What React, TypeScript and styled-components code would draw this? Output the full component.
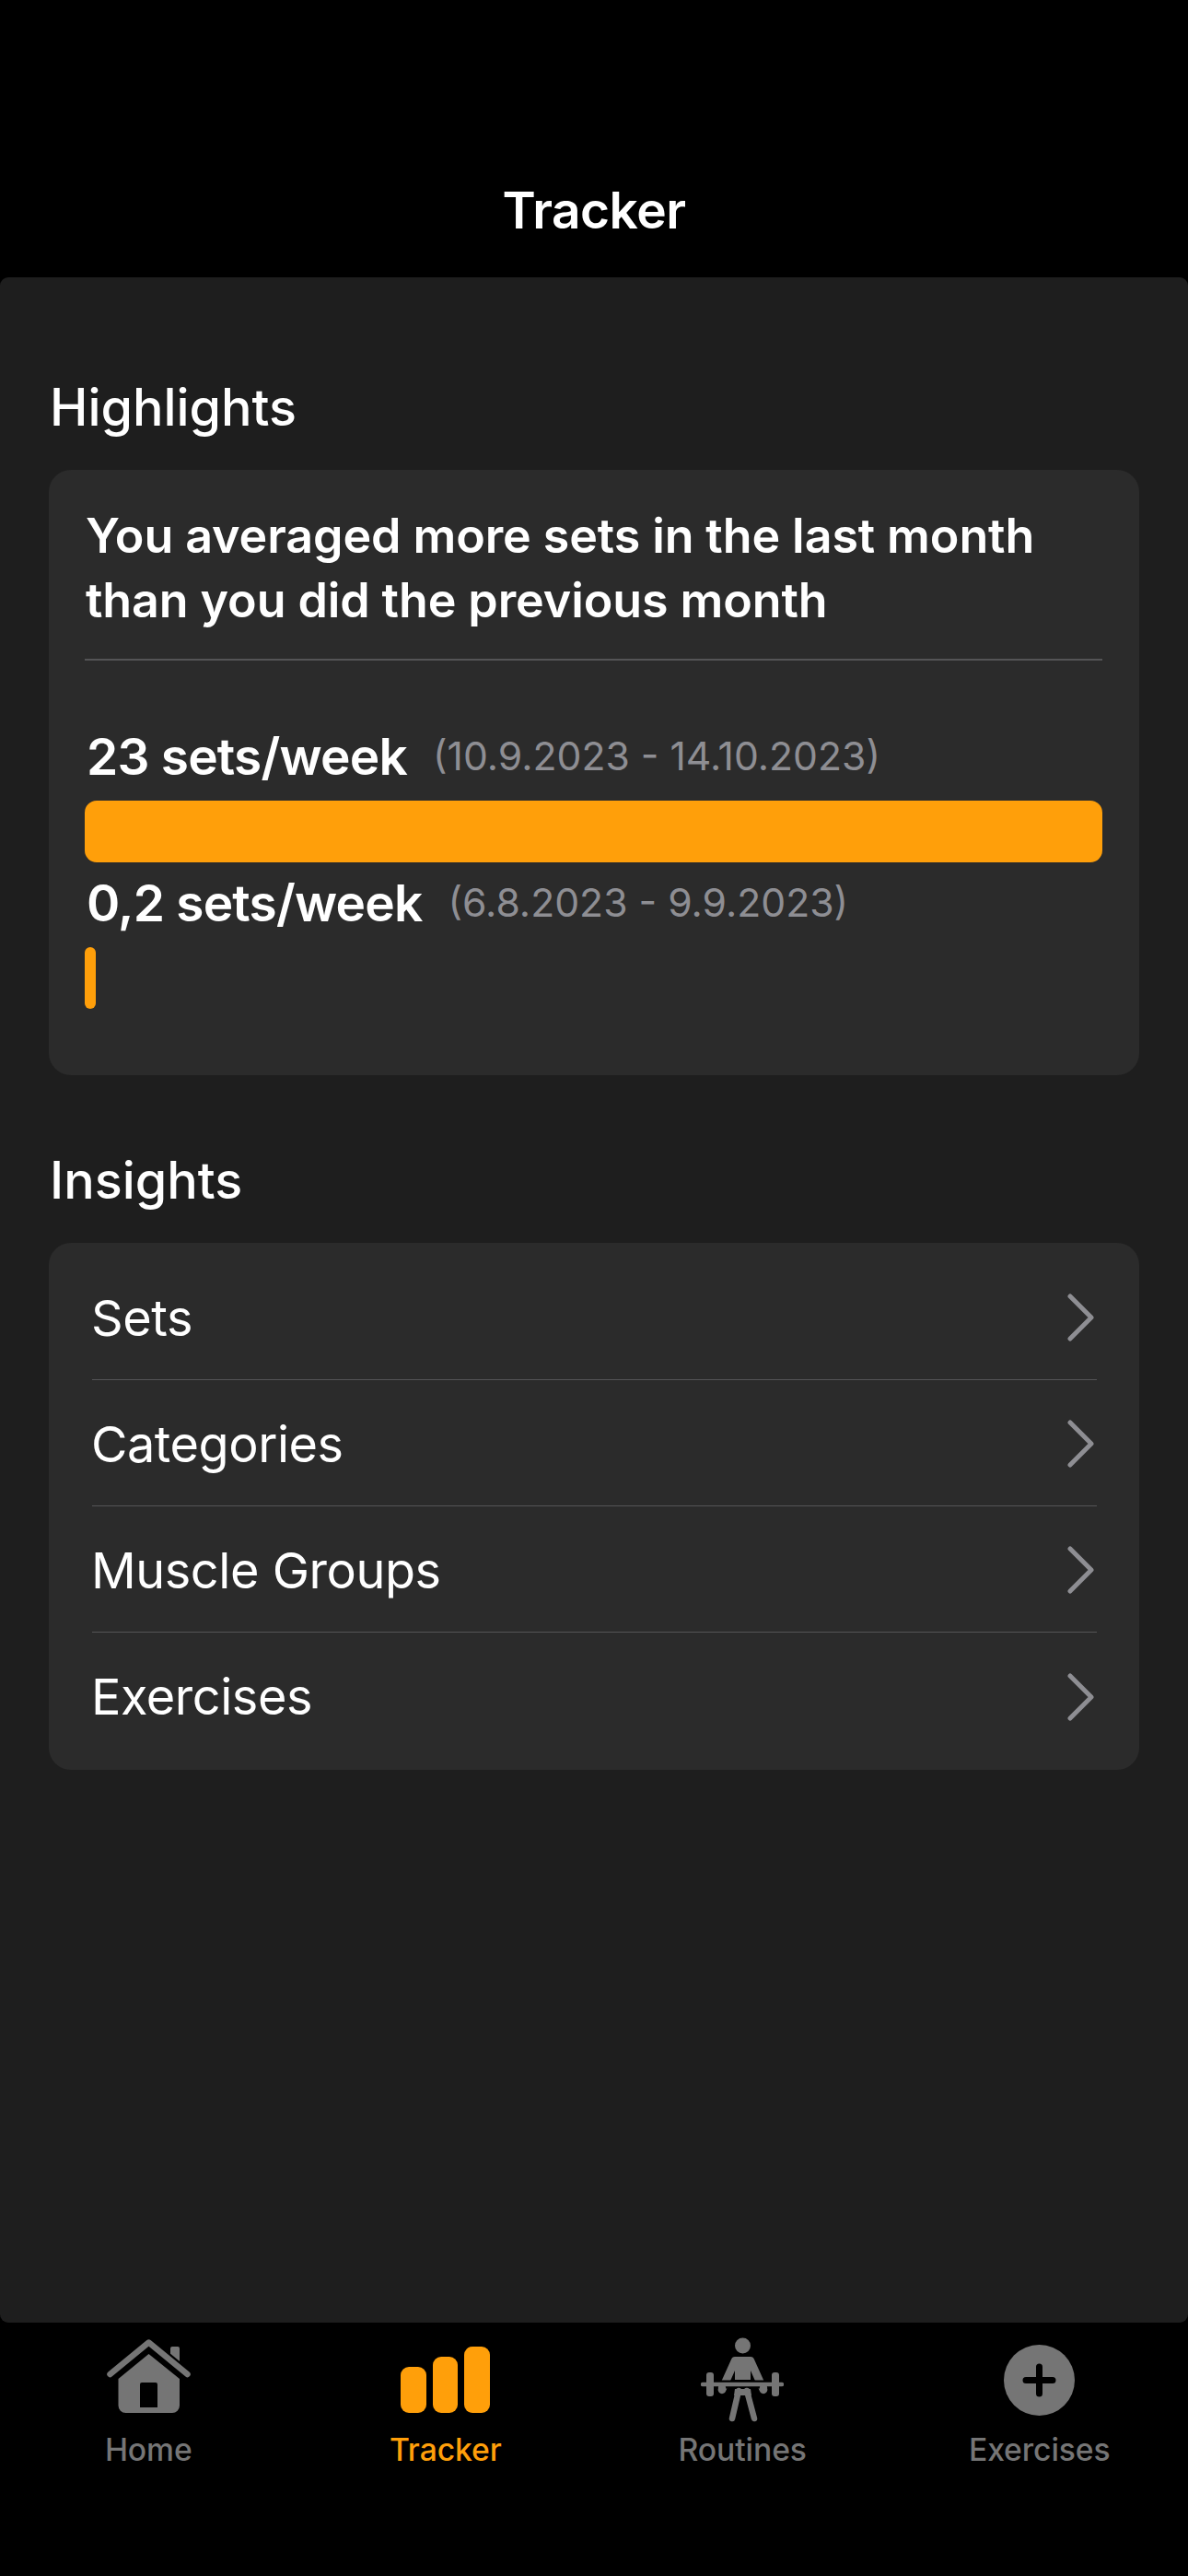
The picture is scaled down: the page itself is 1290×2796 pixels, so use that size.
import React from "react";
import styled, { createGlobalStyle } from "styled-components";

const GlobalStyle = createGlobalStyle`
  html, body {
    margin: 0;
    padding: 0;
    background: #000;
  }
  * {
    box-sizing: border-box;
  }
`;

const ORANGE = "#ff9f0a";
const GRAY = "#757575";

const Screen = styled.div`
  width: 1290px;
  height: 2796px;
  display: flex;
  flex-direction: column;
  background: #000;
  color: #fff;
  font-family: Inter, "Liberation Sans", sans-serif;
`;

const Header = styled.header`
  height: 301px;
  padding-top: 193px;
  text-align: center;
`;

const Title = styled.h1`
  margin: 0;
  font-size: 55px;
  line-height: 70px;
  font-weight: 600;
  letter-spacing: -0.5px;
`;

const Panel = styled.main`
  height: 2220px;
  padding: 107px 53px 0;
  background: #1e1e1e;
  border-radius: 9px;
`;

const Section = styled.section`
  margin-bottom: 80px;
`;

const SectionTitle = styled.h2`
  margin: 0 0 34px;
  padding-left: 1px;
  font-size: 55.7px;
  line-height: 68px;
  font-weight: 500;
`;

const Card = styled.div`
  background: #2b2b2b;
  border-radius: 24px;
`;

const HighlightCard = styled(Card)`
  height: 657px;
  padding: 37px 40px 0 39px;
`;

const Headline = styled.p`
  margin: 0 0 28px;
  padding-left: 1px;
  font-size: 52px;
  line-height: 70px;
  font-weight: 600;
  letter-spacing: -0.1px;
`;

const Divider = styled.div`
  height: 1.5px;
  margin-bottom: 60px;
  background: #545456;
`;

const StatRow = styled.div`
  height: 92px;
  display: flex;
  align-items: center;
  gap: 28px;
  padding: 0 0 4px 2px;
`;

const StatValue = styled.span`
  font-size: 55px;
  line-height: 70px;
  font-weight: 600;
  letter-spacing: -0.8px;
`;

const StatRange = styled.span`
  font-size: 42.7px;
  line-height: 60px;
  font-weight: 400;
  color: #8e8e93;
`;

const Bar = styled.div<{ $width: number }>`
  width: ${(props) => props.$width}px;
  height: 67px;
  background: ${ORANGE};
  border-radius: ${(props) => (props.$width < 30 ? "6px" : "13px")};
`;

const InsightCard = styled(Card)`
  padding: 12px 46px 12px 47px;
`;

const InsightRow = styled.div`
  height: 137px;
  display: flex;
  align-items: center;
  justify-content: space-between;
  padding: 2px 2px 0 0;
  font-size: 54px;
  font-weight: 400;
  letter-spacing: -0.45px;
  border-bottom: 1.5px solid #545456;

  &:last-child {
    border-bottom: none;
  }
`;

const RowLabel = styled.span`
  margin-left: -1px;
`;

const Chevron = styled.svg`
  width: 30px;
  height: 52px;
  fill: none;
  stroke: #8e8e93;
  stroke-width: 5;
  stroke-linecap: round;
  stroke-linejoin: round;
`;

const TabBar = styled.nav`
  height: 275px;
  display: grid;
  grid-template-columns: repeat(4, 1fr);
  padding-top: 16px;
`;

const Tab = styled.div<{ $active?: boolean }>`
  display: flex;
  flex-direction: column;
  align-items: center;
  color: ${(props) => (props.$active ? ORANGE : GRAY)};
`;

const TabIcon = styled.div`
  height: 92px;
  display: flex;
  align-items: center;
  justify-content: center;
`;

const TabLabel = styled.span`
  margin-top: 10px;
  font-size: 33.7px;
  line-height: 40px;
  font-weight: 500;
  letter-spacing: -0.1px;
`;

function HomeIcon() {
  return (
    <svg width="91" height="88" viewBox="0 0 91 88" fill="currentColor">
      <rect x="69" y="8" width="10" height="22" rx="2" />
      <path
        d="M3.5 38 L45.5 3.5 L87.5 38"
        fill="none"
        stroke="#000"
        strokeWidth="11"
      />
      <path
        d="M3.5 38 L45.5 3.5 L87.5 38"
        fill="none"
        stroke="currentColor"
        strokeWidth="6.5"
        strokeLinecap="round"
        strokeLinejoin="round"
      />
      <path
        fillRule="evenodd"
        d="M45.5 16 L79 43 V72 a8 8 0 0 1 -8 8 H20.5 a8 8 0 0 1 -8 -8 V43 Z M38 47 a2 2 0 0 0 -2 2 V74 H55 V49 a2 2 0 0 0 -2 -2 Z"
      />
    </svg>
  );
}

function TrackerIcon() {
  return (
    <svg width="97" height="72" viewBox="0 0 97 72" fill="currentColor">
      <rect x="0" y="22" width="28" height="50" rx="9" />
      <rect x="35" y="11" width="27" height="61" rx="9" />
      <rect x="69" y="0" width="28" height="72" rx="9" />
    </svg>
  );
}

function LifterIcon() {
  return (
    <svg width="90" height="92" viewBox="0 0 90 92" fill="currentColor">
      <ellipse cx="45.5" cy="9" rx="8.5" ry="8.5" />
      <path d="M37 21 H54 Q57 21 58 24 L72 55 a4.2 4.2 0 0 1 -8 3.5 L54 36 V46 H37 V36 L27 58.5 a4.2 4.2 0 0 1 -8 -3.5 L33 24 Q34 21 37 21 Z" />
      <path d="M18 51 H73" stroke="#000" strokeWidth="9" fill="none" />
      <path
        d="M41 58 L34 88 M50 58 L58 88"
        stroke="currentColor"
        strokeWidth="6.5"
        strokeLinecap="round"
        strokeLinejoin="round"
        fill="none"
      />
      <path d="M37 56 H54 L55 63 H36 Z" />
      <path
        d="M2 51 H88"
        stroke="currentColor"
        strokeWidth="4.5"
        strokeLinecap="round"
        fill="none"
      />
      <rect x="6" y="38" width="8" height="26" rx="3" />
      <rect x="77" y="38" width="8" height="26" rx="3" />
      <circle cx="23" cy="55" r="4.2" />
      <circle cx="68" cy="55" r="4.2" />
    </svg>
  );
}

function AddIcon() {
  return (
    <svg width="77" height="77" viewBox="0 0 77 77">
      <circle cx="38.5" cy="38.5" r="38.5" fill="currentColor" />
      <path
        d="M38.5 24 V53 M24 38.5 H53"
        stroke="#000"
        strokeWidth="7"
        strokeLinecap="round"
      />
    </svg>
  );
}

const insights = ["Sets", "Categories", "Muscle Groups", "Exercises"];

export default function App() {
  return (
    <Screen>
      <GlobalStyle />
      <Header>
        <Title>Tracker</Title>
      </Header>
      <Panel>
        <Section>
          <SectionTitle>Highlights</SectionTitle>
          <HighlightCard>
            <Headline>
              You averaged more sets in the last month
              <br />
              than you did the previous month
            </Headline>
            <Divider />
            <StatRow>
              <StatValue>23 sets/week</StatValue>
              <StatRange>(10.9.2023 - 14.10.2023)</StatRange>
            </StatRow>
            <Bar $width={1105} />
            <StatRow>
              <StatValue>0,2 sets/week</StatValue>
              <StatRange>(6.8.2023 - 9.9.2023)</StatRange>
            </StatRow>
            <Bar $width={12} />
          </HighlightCard>
        </Section>
        <Section>
          <SectionTitle>Insights</SectionTitle>
          <InsightCard>
            {insights.map((name) => (
              <InsightRow key={name}>
                <RowLabel>{name}</RowLabel>
                <Chevron viewBox="0 0 30 52">
                  <path d="M3 3 L26 26 L3 49" />
                </Chevron>
              </InsightRow>
            ))}
          </InsightCard>
        </Section>
      </Panel>
      <TabBar>
        <Tab>
          <TabIcon>
            <HomeIcon />
          </TabIcon>
          <TabLabel>Home</TabLabel>
        </Tab>
        <Tab $active>
          <TabIcon>
            <TrackerIcon />
          </TabIcon>
          <TabLabel>Tracker</TabLabel>
        </Tab>
        <Tab>
          <TabIcon>
            <LifterIcon />
          </TabIcon>
          <TabLabel>Routines</TabLabel>
        </Tab>
        <Tab>
          <TabIcon>
            <AddIcon />
          </TabIcon>
          <TabLabel>Exercises</TabLabel>
        </Tab>
      </TabBar>
    </Screen>
  );
}
